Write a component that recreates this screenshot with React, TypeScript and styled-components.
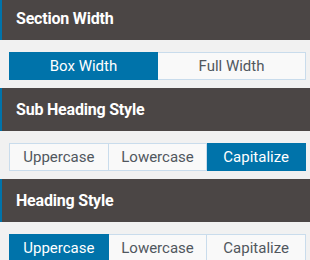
import React, { useState } from "react";
import styled, { createGlobalStyle } from "styled-components";

const Global = createGlobalStyle`
  html, body { margin: 0; padding: 0; background: #f1f1f1; }
  body { font-family: Roboto, "Liberation Sans", Arial, sans-serif; overflow: hidden; }
`;

const Panel = styled.div`
  width: 310px;
  margin-top: -3px;
  display: flex;
  flex-direction: column;
`;

const Section = styled.section`
  display: flex;
  flex-direction: column;
`;

const Header = styled.div`
  height: 43px;
  box-sizing: border-box;
  background: #4b4645;
  border-left: 2px solid #0073aa;
  padding-left: 14px;
  display: flex;
  align-items: center;
  color: #ffffff;
  font-size: 16px;
  font-weight: 700;
  letter-spacing: -0.2px;
`;

const Body = styled.div`
  padding: 12px 4px 8px 9px;
`;

const Group = styled.div`
  display: flex;
  height: 28px;
`;

const Option = styled.button<{ $active: boolean }>`
  flex: 1 1 0;
  min-width: 0;
  height: 28px;
  box-sizing: border-box;
  margin: 0;
  padding: 0;
  font-family: Roboto, "Liberation Sans", Arial, sans-serif;
  font-size: 15px;
  line-height: 26px;
  cursor: pointer;
  border: 1px solid ${(p) => (p.$active ? "#0073aa" : "#c9dcec")};
  background: ${(p) => (p.$active ? "#0073aa" : "#f9f9f9")};
  color: ${(p) => (p.$active ? "#ffffff" : "#50575e")};
  & + & { border-left-width: ${(p) => (p.$active ? "1px" : "0")}; }
  outline: none;
`;

type Sec = { title: string; options: string[]; initial: number };

const sections: Sec[] = [
  { title: "Section Width", options: ["Box Width", "Full Width"], initial: 0 },
  { title: "Sub Heading Style", options: ["Uppercase", "Lowercase", "Capitalize"], initial: 2 },
  { title: "Heading Style", options: ["Uppercase", "Lowercase", "Capitalize"], initial: 0 },
];

function Control({ sec }: { sec: Sec }) {
  const [sel, setSel] = useState(sec.initial);
  return (
    <Section>
      <Header>{sec.title}</Header>
      <Body>
        <Group>
          {sec.options.map((o, i) => (
            <Option key={o} $active={i === sel} onClick={() => setSel(i)}>
              {o}
            </Option>
          ))}
        </Group>
      </Body>
    </Section>
  );
}

export default function App() {
  return (
    <>
      <Global />
      <Panel>
        {sections.map((s) => (
          <Control key={s.title} sec={s} />
        ))}
      </Panel>
    </>
  );
}
